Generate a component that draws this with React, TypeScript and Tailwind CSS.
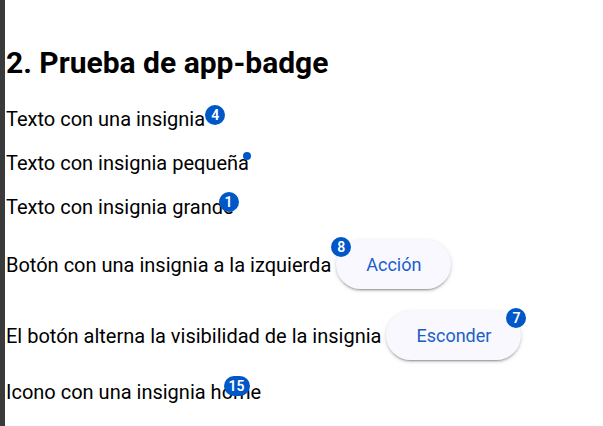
export default function App() {
  return (
    <div className="flex min-h-[426px] bg-white font-['Roboto',sans-serif] text-black">
      {/* left edge bar */}
      <div className="w-[5px] shrink-0 bg-[#3a3a3a]" />

      <div className="pl-px">
        <h2 className="mt-[45px] text-[30px] font-bold leading-[36px]">2. Prueba de app-badge</h2>

        {/* Row 1 */}
        <div className="mt-[26px] flex items-start text-[20px] leading-6">
          <span>Texto con una insignia</span>
          <span className="mt-[-2px] flex h-5 w-5 items-center justify-center rounded-full bg-[#0057c8] text-[14px] font-semibold leading-none text-white">
            4
          </span>
        </div>

        {/* Row 2 */}
        <div className="mt-[20px] flex items-start text-[20px] leading-6">
          <span>Texto con insignia pequeña</span>
          <span className="ml-[-6px] mt-[1px] h-2 w-2 rounded-full bg-[#0057c8]" />
        </div>

        {/* Row 3 */}
        <div className="mt-[20px] flex items-start text-[20px] leading-6">
          <span>Texto con insignia grande</span>
          <span className="relative ml-[-15px] mt-[-3px] flex h-5 w-5 items-center justify-center rounded-full bg-[#0057c8] text-[14px] font-semibold leading-none text-white">
            1
          </span>
        </div>

        {/* Row 4 */}
        <div className="mt-[21px] flex items-center text-[20px] leading-6">
          <span>Botón con una insignia a la izquierda</span>
          <div className="relative ml-[5px]">
            <button className="h-[49px] rounded-full bg-[#f8f8fe] px-[30px] text-[18px] text-[#1a5fc8] shadow-[0_3px_1px_-2px_rgba(0,0,0,0.2),0_2px_2px_0_rgba(0,0,0,0.14),0_1px_5px_0_rgba(0,0,0,0.12)]">
              Acción
            </button>
            <span className="absolute left-[-5px] top-[-3px] flex h-5 w-5 items-center justify-center rounded-full bg-[#0057c8] text-[14px] font-semibold leading-none text-white">
              8
            </span>
          </div>
        </div>

        {/* Row 5 */}
        <div className="mt-[22px] flex items-center text-[20px] leading-6">
          <span>El botón alterna la visibilidad de la insignia</span>
          <div className="relative ml-[5px]">
            <button className="h-[49px] rounded-full bg-[#f8f8fe] px-[30px] text-[18px] text-[#1a5fc8] shadow-[0_3px_1px_-2px_rgba(0,0,0,0.2),0_2px_2px_0_rgba(0,0,0,0.14),0_1px_5px_0_rgba(0,0,0,0.12)]">
              Esconder
            </button>
            <span className="absolute right-[-5px] top-[-3px] flex h-5 w-5 items-center justify-center rounded-full bg-[#0057c8] text-[14px] font-semibold leading-none text-white">
              7
            </span>
          </div>
        </div>

        {/* Row 6 */}
        <div className="mt-[20px] text-[20px] leading-6">
          Icono con una insignia{' '}
          <span className="relative">
            home
            <span className="absolute left-[13px] top-[-4px] flex h-5 w-[26px] items-center justify-center rounded-full bg-[#0057c8] text-[14px] font-semibold leading-none text-white">
              15
            </span>
          </span>
        </div>
      </div>
    </div>
  );
}
